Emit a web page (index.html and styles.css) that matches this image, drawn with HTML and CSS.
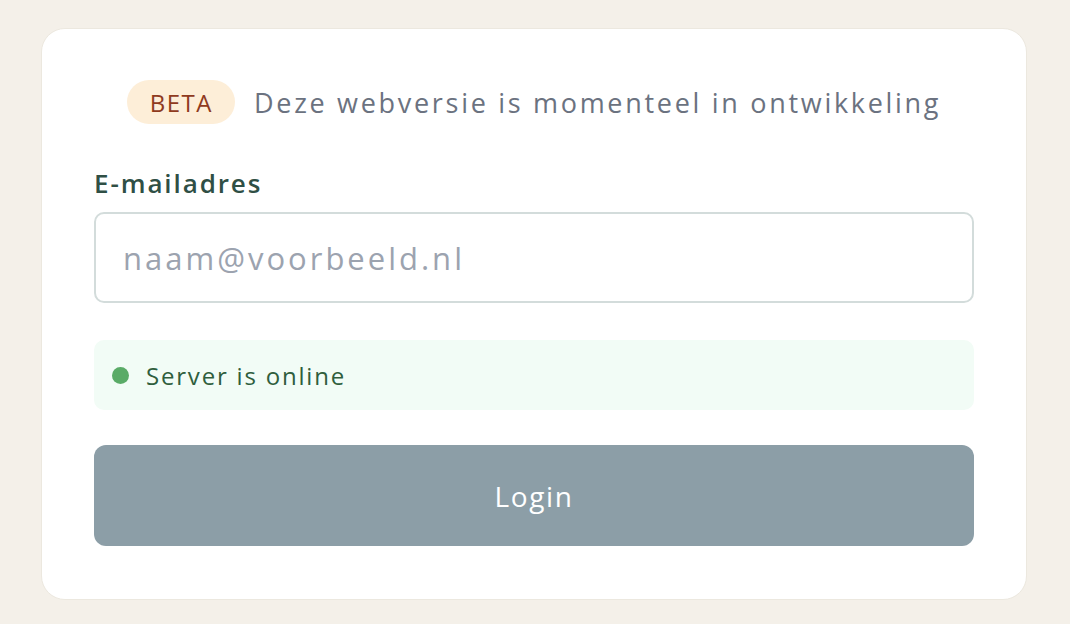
FILE: index.html
```html
<!DOCTYPE html>
<html lang="nl">
<head>
  <meta charset="UTF-8" />
  <meta name="viewport" content="width=device-width, initial-scale=1.0" />
  <title>Inloggen</title>
  <link rel="stylesheet" href="styles.css">
</head>
<body>
  <div class="card">
    <!-- Beta melding -->
    <div class="beta-row">
      <span class="badge">BETA</span>
      <span class="beta-text">Deze webversie is momenteel in ontwikkeling</span>
    </div>

    <!-- E-mail veld -->
    <div class="form-group">
      <label for="email">E-mailadres</label>
      <input id="email" type="email" placeholder="naam@voorbeeld.nl" />
    </div>

    <!-- Server status -->
    <div class="status">
      <span class="status-dot"></span>
      <span>Server is online</span>
    </div>

    <button class="login-btn" type="button">Login</button>
  </div>
</body>
</html>
```

FILE: styles.css
```css
:root {
  --bg-page: #f4f0e9;
  --bg-card: #ffffff;
  --border-card: #ece8df;
  --text-muted: #6b7280;
  --text-label: #2f4f45;
  --badge-bg: #fdeed8;
  --badge-text: #8f3a1e;
  --input-border: #d3dcdb;
  --placeholder: #9ca3af;
  --status-bg: #f2fcf6;
  --status-text: #2f5e3d;
  --status-dot: #5aab67;
  --btn-bg: #8c9ea7;
}

* {
  box-sizing: border-box;
}

body {
  margin: 0;
  background-color: var(--bg-page);
  font-family: "Open Sans", "Liberation Sans", sans-serif;
  padding: 28px 0 0 41px;
}

.card {
  width: 986px;
  background-color: var(--bg-card);
  border: 1px solid var(--border-card);
  border-radius: 24px;
  padding: 51px 52px 53px;
  display: flex;
  flex-direction: column;
}

/* Beta melding */
.beta-row {
  display: flex;
  align-items: center;
  justify-content: center;
  gap: 19px;
  margin-bottom: 41px;
}
.badge {
  background-color: var(--badge-bg);
  color: var(--badge-text);
  font-size: 24px;
  letter-spacing: 1.5px;
  height: 44px;
  padding: 0 22px 0 23px;
  border-radius: 22px;
  display: flex;
  align-items: center;
}
.beta-text {
  font-size: 27px;
  color: var(--text-muted);
  letter-spacing: 2.7px;
}

/* Formulier */
.form-group {
  display: flex;
  flex-direction: column;
  margin-bottom: 37px;
}
.form-group label {
  font-size: 26px;
  font-weight: 600;
  color: var(--text-label);
  margin-bottom: 11px;
  letter-spacing: 1.9px;
}
.form-group input {
  height: 91px;
  border: 2px solid var(--input-border);
  border-radius: 10px;
  padding: 0 27px;
  font-family: inherit;
  font-size: 31px;
  color: #1f2937;
  outline: none;
  letter-spacing: 3px;
}
.form-group input::placeholder {
  color: var(--placeholder);
}

/* Server status */
.status {
  display: flex;
  align-items: center;
  gap: 17px;
  height: 70px;
  padding: 0 18px;
  background-color: var(--status-bg);
  border-radius: 10px;
  font-size: 24px;
  color: var(--status-text);
  letter-spacing: 1.8px;
  margin-bottom: 35px;
}
.status-dot {
  width: 17px;
  height: 17px;
  border-radius: 50%;
  background-color: var(--status-dot);
}

/* Login knop */
.login-btn {
  height: 101px;
  border: none;
  border-radius: 12px;
  background-color: var(--btn-bg);
  color: #ffffff;
  font-family: inherit;
  font-size: 28px;
  font-weight: 500;
  letter-spacing: 1.6px;
}
```
